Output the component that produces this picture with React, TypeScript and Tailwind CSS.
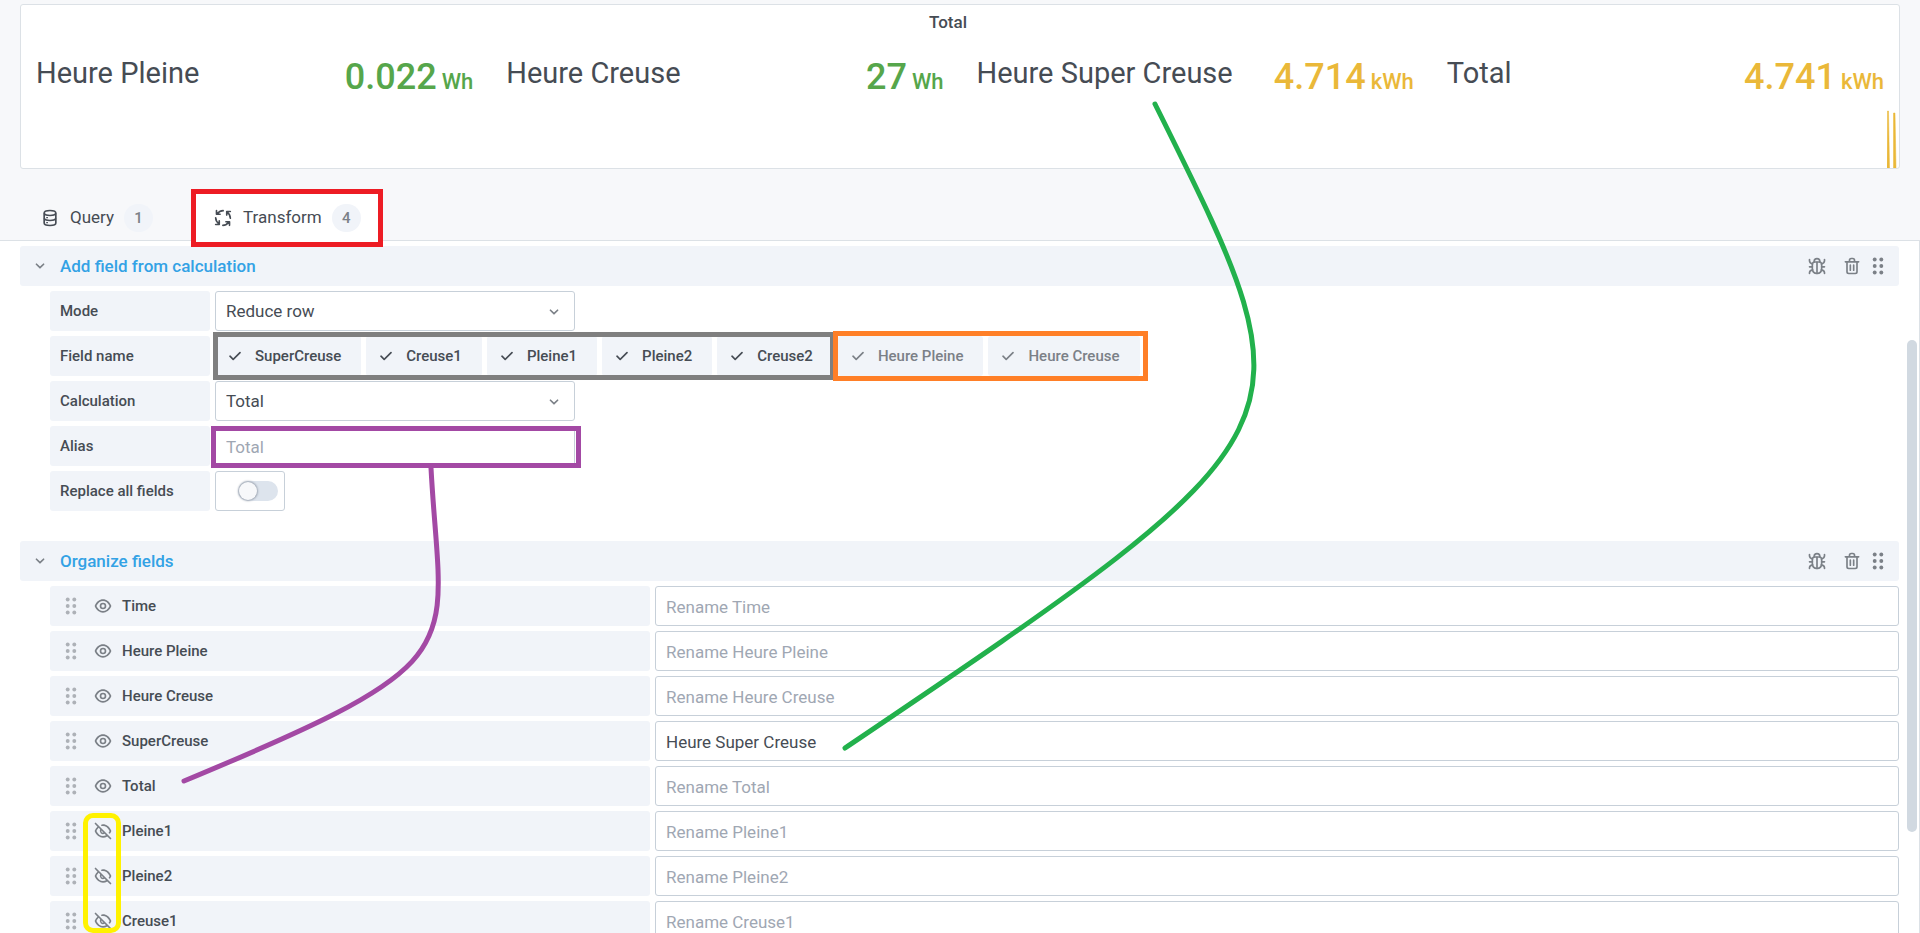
import React, { useState } from "react";

type IconProps = { className?: string };

const AngleDown = ({ className = "" }: IconProps) => (
  <svg viewBox="0 0 24 24" fill="currentColor" aria-hidden="true" className={`size-5 ${className}`}>
    <path d="M17,9.17a1,1,0,0,0-1.41,0L12,12.71,8.46,9.17a1,1,0,0,0-1.41,0,1,1,0,0,0,0,1.42l4.24,4.24a1,1,0,0,0,1.42,0L17,10.59A1,1,0,0,0,17,9.17Z" />
  </svg>
);

const Check = () => (
  <svg viewBox="0 0 24 24" fill="currentColor" aria-hidden="true" className="size-5">
    <path d="M18.71,7.21a1,1,0,0,0-1.42,0L9.84,14.67,6.71,11.53A1,1,0,1,0,5.29,13l3.84,3.84a1,1,0,0,0,1.42,0l8.16-8.16A1,1,0,0,0,18.71,7.21Z" />
  </svg>
);

const Eye = () => (
  <svg viewBox="0 0 24 24" fill="currentColor" aria-hidden="true" className="size-5">
    <path d="M21.92,11.6C19.9,6.91,16.1,4,12,4S4.1,6.91,2.08,11.6a1,1,0,0,0,0,.8C4.1,17.09,7.9,20,12,20s7.9-2.91,9.92-7.6A1,1,0,0,0,21.92,11.6ZM12,18c-3.17,0-6.17-2.29-7.9-6C5.83,8.29,8.83,6,12,6s6.17,2.29,7.9,6C18.17,15.71,15.17,18,12,18ZM12,8a4,4,0,1,0,4,4A4,4,0,0,0,12,8Zm0,6a2,2,0,1,1,2-2A2,2,0,0,1,12,14Z" />
  </svg>
);

const EyeSlash = () => (
  <svg viewBox="0 0 24 24" fill="currentColor" aria-hidden="true" className="size-5">
    <path d="M10.94,6.08A6.93,6.93,0,0,1,12,6c3.18,0,6.17,2.29,7.91,6a15.23,15.23,0,0,1-.9,1.64,1,1,0,0,0-.16.55,1,1,0,0,0,1.86.5,15.77,15.77,0,0,0,1.21-2.3,1,1,0,0,0,0-.79C19.9,6.91,16.1,4,12,4a7.77,7.77,0,0,0-1.4.12,1,1,0,1,0,.34,2ZM3.71,2.29A1,1,0,0,0,2.29,3.71L5.39,6.8a14.62,14.62,0,0,0-3.31,4.8,1,1,0,0,0,0,.8C4.1,17.09,7.9,20,12,20a9.26,9.26,0,0,0,5.05-1.54l3.24,3.25a1,1,0,0,0,1.42,0,1,1,0,0,0,0-1.42Zm6.36,9.19,2.45,2.45A1.81,1.81,0,0,1,12,14a2,2,0,0,1-2-2A1.81,1.81,0,0,1,10.07,11.48ZM12,18c-3.18,0-6.17-2.29-7.9-6A12.09,12.09,0,0,1,6.8,8.21L8.57,10A4,4,0,0,0,14,15.43L15.59,17A7.24,7.24,0,0,1,12,18Z" />
  </svg>
);

const Trash = () => (
  <svg viewBox="0 0 24 24" fill="currentColor" aria-hidden="true" className="size-5">
    <path d="M10,18a1,1,0,0,0,1-1V11a1,1,0,0,0-2,0v6A1,1,0,0,0,10,18ZM20,6H16V5a3,3,0,0,0-3-3H11A3,3,0,0,0,8,5V6H4A1,1,0,0,0,4,8H5V19a3,3,0,0,0,3,3h8a3,3,0,0,0,3-3V8h1a1,1,0,0,0,0-2ZM10,5a1,1,0,0,1,1-1h2a1,1,0,0,1,1,1V6H10Zm7,14a1,1,0,0,1-1,1H8a1,1,0,0,1-1-1V8H17Zm-3-1a1,1,0,0,0,1-1V11a1,1,0,0,0-2,0v6A1,1,0,0,0,14,18Z" />
  </svg>
);

const Bug = () => (
  <svg viewBox="0 0 24 24" fill="none" stroke="currentColor" strokeWidth="2" strokeLinecap="round" strokeLinejoin="round" aria-hidden="true" className="size-5">
    <path d="M8.6 7.2V6.5a3.4 3.4 0 0 1 6.8 0v.7" />
    <path d="M9 7.2h6c1.7 0 2.6 1.4 2.6 3.4v4.2c0 3.7-2.3 6.2-5.6 6.2s-5.6-2.5-5.6-6.2v-4.2c0-2 .9-3.4 2.6-3.4Z" />
    <path d="M12 7.5V21" />
    <path d="M3 4.3v1.3c0 1.8 1.2 3.1 3.6 3.9M21 4.3v1.3c0 1.8-1.2 3.1-3.6 3.9" />
    <path d="M3 13h3.4M17.6 13H21" />
    <path d="M3 21v-.8c0-1.8 1.2-2.9 3.8-3.5M21 21v-.8c0-1.8-1.2-2.9-3.8-3.5" />
  </svg>
);

const Dots = () => (
  <svg viewBox="0 0 20 20" fill="currentColor" aria-hidden="true" className="size-5">
    {[3.5, 10, 16.5].map((y) => (
      <React.Fragment key={y}>
        <circle cx="6.7" cy={y} r="1.95" />
        <circle cx="13.3" cy={y} r="1.95" />
      </React.Fragment>
    ))}
  </svg>
);

const Database = () => (
  <svg viewBox="0 0 24 24" fill="none" stroke="currentColor" strokeWidth="2" aria-hidden="true" className="size-5">
    <path d="M5 6c0-1.8 3-3 7-3s7 1.2 7 3v12c0 1.8-3 3-7 3s-7-1.2-7-3Z" />
    <path d="M5 6.5C5.8 8 8.2 9 12 9s6.2-1 7-2.5M5 12.5c.8 1.5 3.2 2.5 7 2.5s6.2-1 7-2.5" />
    <path d="M7.5 11.5h2M7.5 17.5h2" strokeWidth="1.6" />
  </svg>
);

const Process = () => (
  <svg viewBox="0 0 24 24" fill="none" stroke="currentColor" strokeWidth="2" strokeLinecap="round" strokeLinejoin="round" aria-hidden="true" className="size-5">
    {[0, 90, 180, 270].map((a) => (
      <path key={a} transform={`rotate(${a} 12 12)`} d="M4.2 3.2v4.3h4.3M5 7.2C6.6 4.8 9 3.3 12.2 3.2" />
    ))}
  </svg>
);

const stats = [
  { label: "Heure Pleine", value: "0.022", unit: "Wh", color: "text-[#56a64b]" },
  { label: "Heure Creuse", value: "27", unit: "Wh", color: "text-[#56a64b]" },
  { label: "Heure Super Creuse", value: "4.714", unit: "kWh", color: "text-[#eab839]" },
  { label: "Total", value: "4.741", unit: "kWh", color: "text-[#eab839]" },
];

const fields = [
  { name: "Time", visible: true, rename: "" },
  { name: "Heure Pleine", visible: true, rename: "" },
  { name: "Heure Creuse", visible: true, rename: "" },
  { name: "SuperCreuse", visible: true, rename: "Heure Super Creuse" },
  { name: "Total", visible: true, rename: "" },
  { name: "Pleine1", visible: false, rename: "" },
  { name: "Pleine2", visible: false, rename: "" },
  { name: "Creuse1", visible: false, rename: "" },
];

const Badge = ({ children }: { children: React.ReactNode }) => (
  <span className="flex h-7 w-[29px] items-center justify-center rounded-full bg-[#f1f4f9] text-[15px] font-medium text-[#7b8087]">
    {children}
  </span>
);

const SectionHeader = ({ title }: { title: string }) => (
  <header className="flex h-10 items-center rounded-[3px] bg-[#f1f4f9] pr-[11px] pl-[10px] text-[#7b8087]">
    <button type="button" className="flex items-center gap-[10px]">
      <AngleDown />
      <span className="pt-0.5 text-[17px] font-medium text-[#33a2e5]">{title}</span>
    </button>
    <div className="ml-auto flex items-center gap-[6px]">
      <button type="button" aria-label="Debug" className="mr-[9px]"><Bug /></button>
      <button type="button" aria-label="Remove"><Trash /></button>
      <button type="button" aria-label="Move"><Dots /></button>
    </div>
  </header>
);

const labelBox = "flex h-10 w-40 shrink-0 items-center rounded-[3px] bg-[#f1f4f9] px-[10px] text-[15px] font-medium";
const control = "h-10 rounded-[3px] border border-[#c7d0d9] bg-white px-[10px] text-[17px] text-[#464c54] placeholder-[#9fa7b3] outline-none";

const Select = ({ id, label, options }: { id: string; label: string; options: string[] }) => (
  <div className="flex gap-[5px]">
    <label htmlFor={id} className={labelBox}>{label}</label>
    <div className="relative w-90">
      <select id={id} className={`${control} w-full appearance-none pt-0.5`}>
        {options.map((o) => <option key={o}>{o}</option>)}
      </select>
      <AngleDown className="pointer-events-none absolute top-[11px] right-[11px] text-[#7b8087]" />
    </div>
  </div>
);

const Chip = ({ children, muted = false }: { children: string; muted?: boolean }) => (
  <button
    type="button"
    aria-pressed={!muted}
    className={`flex h-10 items-center gap-[10px] rounded-[3px] bg-[#f1f4f9] pr-5 pl-[10px] text-[15px] font-medium ${muted ? "text-[#7b8087]" : "text-[#464c54]"}`}
  >
    <Check />
    {children}
  </button>
);

export default function App() {
  const [replaceAll, setReplaceAll] = useState(false);

  return (
    <div className="relative flex h-screen flex-col overflow-hidden bg-[#f7f8fa] font-['Roboto',sans-serif] text-[#464c54]">
      <section className="relative mx-5 mt-1 h-[165px] shrink-0 overflow-hidden rounded-[3px] border border-[#dce1e6] bg-white">
        <h2 className="pt-[3px] pr-6 text-center text-[17px] leading-7 font-medium">Total</h2>
        <div className="grid grid-cols-4 gap-x-[3px] pt-[14px]">
          {stats.map((s) => (
            <div key={s.label} className="flex items-start justify-between px-[15px]">
              <span className="text-[29px] leading-[46px] whitespace-nowrap">{s.label}</span>
              <span className={`text-[36px] leading-[54px] font-medium whitespace-nowrap ${s.color}`}>
                {s.value} <span className="-ml-1 text-[22px]">{s.unit}</span>
              </span>
            </div>
          ))}
        </div>
        <svg viewBox="0 0 12 58" aria-hidden="true" className="absolute right-0 bottom-0 h-[58px] w-3">
          <path d="M0 58 .5 1h1l1 57ZM6.5 58 6.5 3h1.500l1 55Z" fill="#eab839" stroke="#eab839" strokeWidth=".5" />
        </svg>
      </section>

      <nav className="mt-[25px] flex shrink-0 gap-5 border-b border-[#dce1e6] px-5">
        <button type="button" className="flex h-[46px] items-center gap-[10px] px-5 pt-0.5 text-[17px]">
          <Database />
          Query
          <Badge>1</Badge>
        </button>
        <button type="button" className="relative z-10 -mb-px flex h-[47px] items-center gap-[10px] bg-white px-5 pt-px text-[17px]">
          <Process />
          Transform
          <Badge>4</Badge>
          <span className="pointer-events-none absolute -inset-x-[2px] -top-[5px] -bottom-[6px] border-[5px] border-[#ed1c24]" />
        </button>
      </nav>

      <main className="relative min-h-0 flex-1 overflow-hidden border-r border-[#dce1e6] bg-white px-5 pt-[5px]">
        <SectionHeader title="Add field from calculation" />
        <div className="mt-[5px] ml-[30px] flex flex-col gap-[5px]">
          <Select id="mode" label="Mode" options={["Reduce row", "Binary operation"]} />
          <div className="flex gap-[5px]">
            <span className={labelBox}>Field name</span>
            <div className="flex gap-[5px]">
              <div className="relative flex gap-[5px]">
                <Chip>SuperCreuse</Chip>
                <Chip>Creuse1</Chip>
                <Chip>Pleine1</Chip>
                <Chip>Pleine2</Chip>
                <Chip>Creuse2</Chip>
                <span className="pointer-events-none absolute -inset-x-[2px] -inset-y-1 border-[5px] border-[#7f7f7f]" />
              </div>
              <div className="relative flex gap-[5px]">
                <Chip muted>Heure Pleine</Chip>
                <Chip muted>Heure Creuse</Chip>
                <span className="pointer-events-none absolute -top-[5px] -right-2 -bottom-[5px] -left-[5px] border-[5px] border-[#ff7f27]" />
              </div>
            </div>
          </div>
          <Select id="calculation" label="Calculation" options={["Total", "Mean", "Max", "Min"]} />
          <div className="flex gap-[5px]">
            <label htmlFor="alias" className={labelBox}>Alias</label>
            <div className="relative w-90">
              <input id="alias" type="text" placeholder="Total" className={`${control} w-full pt-px`} />
              <span className="pointer-events-none absolute top-0 -right-[6px] -bottom-[2px] -left-1 border-[5px] border-[#a349a4]" />
            </div>
          </div>
          <div className="flex gap-[5px]">
            <label htmlFor="replace" className={labelBox}>Replace all fields</label>
            <div className="flex h-10 w-[70px] items-center justify-end rounded-[3px] border border-[#c7d0d9] bg-white pr-[6px]">
              <input
                id="replace"
                type="checkbox"
                role="switch"
                checked={replaceAll}
                onChange={(e) => setReplaceAll(e.target.checked)}
                className="flex h-5 w-10 appearance-none items-center rounded-full bg-[#dde4ed] px-px before:size-[18px] before:rounded-full before:bg-[#f7f8fa] before:shadow-[0_0_2px_1px_#9fa7b3] checked:justify-end checked:bg-[#33a2e5]"
              />
            </div>
          </div>
        </div>

        <div className="mt-[30px]">
          <SectionHeader title="Organize fields" />
          <div className="relative mt-[5px] ml-[30px] flex flex-col gap-[5px]">
            {fields.map((f) => (
              <div key={f.name} className="flex gap-[5px]">
                <div className="flex h-10 w-[600px] shrink-0 items-center rounded-[3px] bg-[#f1f4f9] px-[11px] text-[15px] font-medium">
                  <button type="button" aria-label={`Move ${f.name}`} className="text-[#adb1b7]"><Dots /></button>
                  <button type="button" aria-label={`Toggle ${f.name}`} className="mr-[9px] ml-3 text-[#7b8087]">
                    {f.visible ? <Eye /> : <EyeSlash />}
                  </button>
                  <label htmlFor={`rename-${f.name}`}>{f.name}</label>
                </div>
                <input
                  id={`rename-${f.name}`}
                  type="text"
                  defaultValue={f.rename}
                  placeholder={`Rename ${f.name}`}
                  className={`${control} min-w-0 flex-1 pt-px`}
                />
              </div>
            ))}
            <span className="pointer-events-none absolute top-[227px] left-[33px] h-[120px] w-[38px] rounded-[10px] border-[5px] border-[#fff200]" />
          </div>
        </div>

        <div className="absolute top-[99px] right-[2px] h-[492px] w-[10px] rounded-full bg-[#d1d9e1]" />
      </main>

      <svg viewBox="0 0 1920 933" fill="none" strokeWidth="5" strokeLinecap="round" aria-hidden="true" className="pointer-events-none absolute top-0 left-0 z-20 h-[933px] w-[1920px]">
        <path d="M1155 104C1317 430 1322 426 845 748" stroke="#22b14c" />
        <path d="M431 468C441 655 480 658 184 781" stroke="#a349a4" />
      </svg>
    </div>
  );
}
